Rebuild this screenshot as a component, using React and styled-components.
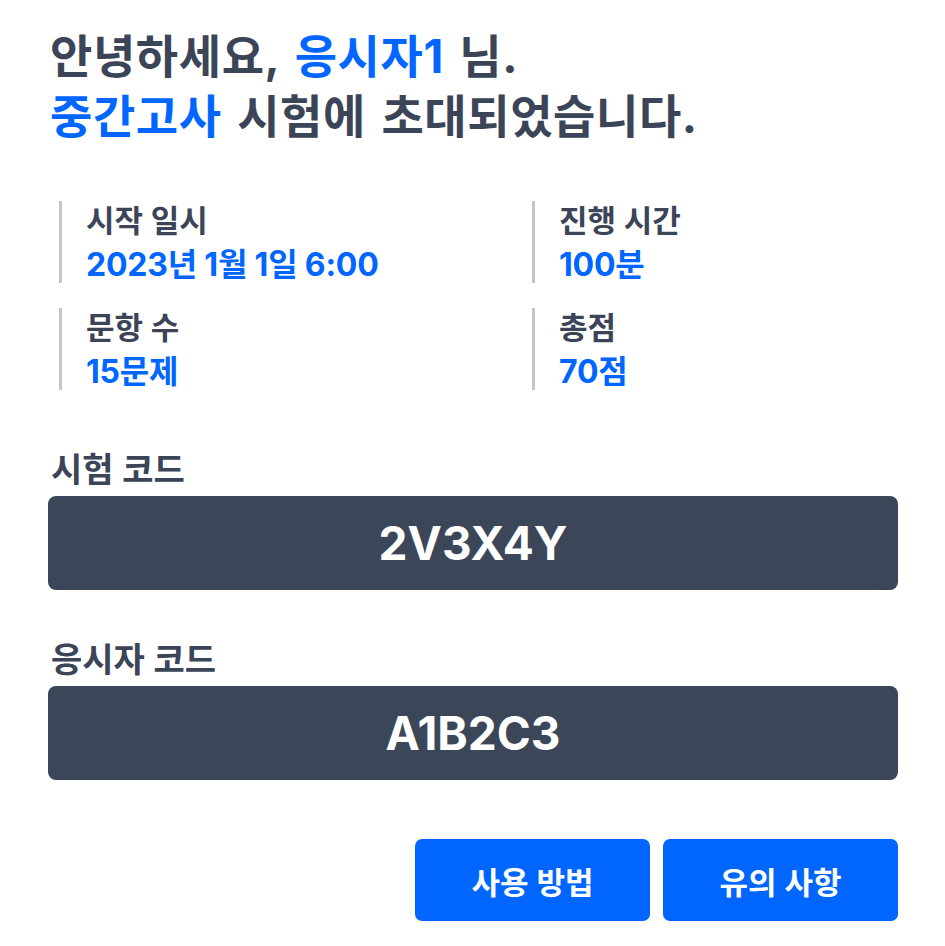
import React from 'react'
import styled, { createGlobalStyle } from 'styled-components'

const GlobalStyle = createGlobalStyle`
	body {
		margin: 0;
		background: #ffffff;
		font-family: Inter, 'Noto Sans CJK KR', sans-serif;
	}
`

const Page = styled.div`
	width: 945px;
	box-sizing: border-box;
	padding: 26px 47px 24px 48px;
	color: #3b4557;
`

const Title = styled.h1`
	margin: 0 0 0 2px;
	font-size: 46px;
	line-height: 60px;
	font-weight: 700;
	letter-spacing: 0.6px;
	word-spacing: 4px;
`

const Blue = styled.span`
	color: #0066ff;
`

const InfoGrid = styled.div`
	margin-top: 55px;
	padding-left: 11px;
	display: grid;
	grid-template-columns: 473px 1fr;
	row-gap: 25px;
`

const InfoItem = styled.div`
	height: 82px;
	border-left: 3px solid #c6c6c6;
	padding-left: 24px;
	display: flex;
	flex-direction: column;
`

const InfoLabel = styled.div`
	font-size: 31px;
	line-height: 40px;
	font-weight: 600;
`

const InfoValue = styled.div`
	margin-top: 6px;
	font-size: 32px;
	line-height: 36px;
	font-weight: 700;
	color: #0066ff;
	letter-spacing: -0.2px;
`

const CodeSection = styled.div`
	margin-top: ${(p) => p.$top}px;
	display: flex;
	flex-direction: column;
	gap: 4px;
`

const CodeLabel = styled.div`
	margin-left: 3px;
	font-size: 34px;
	line-height: 44px;
	font-weight: 600;
`

const CodeBox = styled.div`
	height: 94px;
	border-radius: 8px;
	background: #3c4659;
	color: #ffffff;
	display: flex;
	align-items: center;
	justify-content: center;
	font-size: 46px;
	font-weight: 700;
`

const Actions = styled.div`
	margin-top: 59px;
	display: flex;
	justify-content: flex-end;
	gap: 13px;
`

const ActionButton = styled.button`
	width: 235px;
	height: 82px;
	border: none;
	border-radius: 7px;
	background: #0066ff;
	color: #ffffff;
	font-family: Inter, 'Noto Sans CJK KR', sans-serif;
	font-size: 31px;
	font-weight: 600;
	cursor: pointer;
`

const info = [
	{ label: '시작 일시', value: '2023년 1월 1일 6:00' },
	{ label: '진행 시간', value: '100분' },
	{ label: '문항 수', value: '15문제' },
	{ label: '총점', value: '70점' },
]

export default function App() {
	return (
		<>
			<GlobalStyle />
			<Page>
				<Title>
					안녕하세요, <Blue>응시자1</Blue> 님.
					<br />
					<Blue>중간고사</Blue> 시험에 초대되었습니다.
				</Title>
				<InfoGrid>
					{info.map((item) => (
						<InfoItem key={item.label}>
							<InfoLabel>{item.label}</InfoLabel>
							<InfoValue>{item.value}</InfoValue>
						</InfoItem>
					))}
				</InfoGrid>
				<CodeSection $top={58}>
					<CodeLabel>시험 코드</CodeLabel>
					<CodeBox>2V3X4Y</CodeBox>
				</CodeSection>
				<CodeSection $top={48}>
					<CodeLabel>응시자 코드</CodeLabel>
					<CodeBox>A1B2C3</CodeBox>
				</CodeSection>
				<Actions>
					<ActionButton>사용 방법</ActionButton>
					<ActionButton>유의 사항</ActionButton>
				</Actions>
			</Page>
		</>
	)
}
